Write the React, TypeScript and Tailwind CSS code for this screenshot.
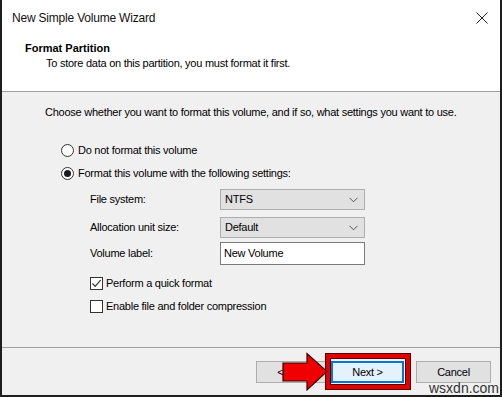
import React from "react";

const font = { fontFamily: '"Liberation Sans", Arial, sans-serif' };

function Radio({ checked }: { checked?: boolean }) {
  return (
    <span className="w-[13px] h-[13px] rounded-full border border-[#333333] bg-white flex items-center justify-center shrink-0">
      {checked && <span className="w-[7px] h-[7px] rounded-full bg-[#1a1a1a]" />}
    </span>
  );
}

function Checkbox({ checked }: { checked?: boolean }) {
  return (
    <span className="w-[13px] h-[13px] border border-[#333333] bg-white flex items-center justify-center shrink-0">
      {checked && (
        <svg width="11" height="11" viewBox="0 0 11 11">
          <path d="M1.5 5.5 L4.2 8.3 L9.6 2.2" fill="none" stroke="#333" strokeWidth="1.2" />
        </svg>
      )}
    </span>
  );
}

function Select({ value }: { value: string }) {
  return (
    <div className="w-[145px] h-[21px] border border-[#adadad] bg-[#e1e1e1] flex items-center pl-[4px] pr-[6px] justify-between">
      <span>{value}</span>
      <svg width="9" height="6" viewBox="0 0 9 6">
        <path d="M0.5 0.8 L4.5 4.8 L8.5 0.8" fill="none" stroke="#555" strokeWidth="1" />
      </svg>
    </div>
  );
}

export default function App() {
  return (
    <div
      className="relative w-[502px] h-[397px] bg-white border-l-2 border-r-2 border-b-2 border-[#1e1e1e] flex flex-col text-[11px] tracking-[-0.25px] text-black overflow-hidden whitespace-nowrap"
      style={font}
    >
      {/* Title bar */}
      <div className="h-[36px] flex items-center justify-between pl-[10px] pr-[10px] shrink-0">
        <span className="text-[12px] tracking-[-0.2px] text-[#111]">New Simple Volume Wizard</span>
        <svg width="12" height="12" viewBox="0 0 12 12" className="mr-[2px]">
          <path d="M0.5 0.5 L11.5 11.5 M11.5 0.5 L0.5 11.5" stroke="#222" strokeWidth="1" />
        </svg>
      </div>
      {/* Header */}
      <div className="h-[55px] shrink-0 pt-[5px] pl-[23px] leading-[15px]">
        <div className="font-bold tracking-normal">Format Partition</div>
        <div className="pl-[21px]">To store data on this partition, you must format it first.</div>
      </div>
      <div className="h-px bg-[#a0a0a0] shrink-0" />
      {/* Body */}
      <div className="flex-1 bg-[#f0f0f0] flex flex-col">
        <div className="flex-1 flex flex-col">
          <div className="mt-[12px] h-[16px] flex items-center pl-[43px]">
            Choose whether you want to format this volume, and if so, what settings you want to use.
          </div>
          <div className="mt-[21px] h-[18px] flex items-center pl-[59px] gap-[4px]">
            <Radio />
            <span>Do not format this volume</span>
          </div>
          <div className="mt-[5px] h-[18px] flex items-center pl-[59px] gap-[4px]">
            <Radio checked />
            <span>Format this volume with the following settings:</span>
          </div>
          <div className="mt-[7px] h-[21px] flex items-center pl-[88px]">
            <span className="w-[130px]">File system:</span>
            <Select value="NTFS" />
          </div>
          <div className="mt-[7px] h-[21px] flex items-center pl-[88px]">
            <span className="w-[130px]">Allocation unit size:</span>
            <Select value="Default" />
          </div>
          <div className="mt-[4px] h-[23px] flex items-center pl-[88px]">
            <span className="w-[130px]">Volume label:</span>
            <div className="w-[145px] h-[23px] border border-[#7a7a7a] bg-white flex items-center pl-[3px]">
              New Volume
            </div>
          </div>
          <div className="mt-[9px] h-[18px] flex items-center pl-[88px] gap-[3px]">
            <Checkbox checked />
            <span>Perform a quick format</span>
          </div>
          <div className="mt-[5px] h-[18px] flex items-center pl-[88px] gap-[3px]">
            <Checkbox />
            <span>Enable file and folder compression</span>
          </div>
        </div>
        <div className="h-px bg-[#a0a0a0] shrink-0" />
        {/* Footer */}
        <div className="h-[47px] shrink-0 flex items-start pt-[13px] pl-[254px]">
          <div className="w-[75px] h-[22px] border border-[#adadad] bg-[#e1e1e1] flex items-center justify-center">
            &lt; Back
          </div>
          <div className="w-[73px] h-[22px] border-2 border-[#0078d7] bg-[#e5f1fb] flex items-center justify-center">
            Next &gt;
          </div>
          <div className="ml-[12px] w-[75px] h-[22px] border border-[#adadad] bg-[#e1e1e1] flex items-center justify-center">
            Cancel
          </div>
        </div>
      </div>

      {/* Red highlight box around Next */}
      <div className="absolute left-[324px] top-[354px] w-[84px] h-[35px] border-[4px] border-[#e00000] outline outline-1 outline-[#5a0000] ring-1 ring-inset ring-[#5a0000]" />
      {/* Red arrow */}
      <svg className="absolute left-[278px] top-[352px]" width="50" height="40" viewBox="0 0 50 40">
        <path
          d="M3 11 L27 11 L27 1.5 L47 19.5 L27 38 L27 29 L3 29 Z"
          fill="#f00000"
          stroke="#3a0000"
          strokeWidth="1.2"
          strokeLinejoin="miter"
        />
      </svg>
      {/* Watermark */}
      <div className="absolute left-[427px] top-[381px] text-[14px] leading-[14px] tracking-normal text-[#333]">
        wsxdn.com
      </div>
    </div>
  );
}
